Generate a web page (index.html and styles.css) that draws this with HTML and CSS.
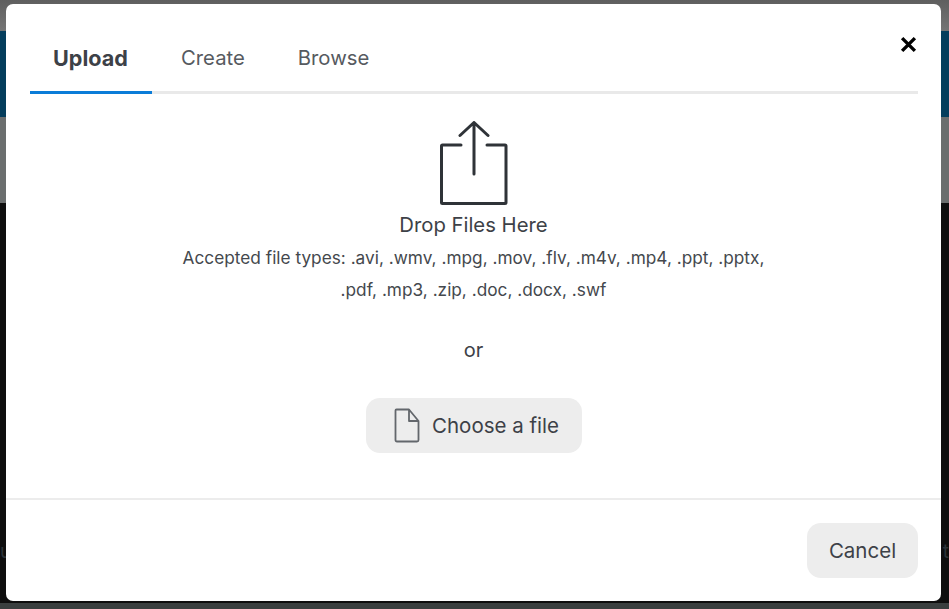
FILE: index.html
```html
<!DOCTYPE html>
<html lang="en">
<head>
<meta charset="utf-8">
<title>Upload</title>
<link rel="stylesheet" href="styles.css">
</head>
<body>
<div class="backdrop">
  <div class="band band-top"></div>
  <div class="band band-blue"></div>
  <div class="band band-grey"></div>
  <div class="band band-dark">
    <span class="ghost">u</span>
    <span class="ghost">t</span>
  </div>
  <div class="band band-bottom"></div>
</div>
<section class="modal">
  <header class="tabs-row">
    <nav class="tabs">
      <a class="tab tab-active">Upload</a>
      <a class="tab">Create</a>
      <a class="tab">Browse</a>
    </nav>
    <svg class="close" viewBox="0 0 16 16" width="17" height="17"><path d="M2 2 14 14M14 2 2 14"/></svg>
  </header>
  <main class="body">
    <svg class="upload-icon" viewBox="0 0 68 84" width="68" height="84">
      <path d="M21 24H2.500Q1.500 24 1.500 25V81.500Q1.500 82.500 2.500 82.500H65Q66 82.500 66 81.500V25Q66 24 65 24H47"/>
      <path d="M34 53V1.500M20 14.500 34 1.500 48 14.500"/>
    </svg>
    <div class="drop">Drop Files Here</div>
    <p class="types">Accepted file types: .avi, .wmv, .mpg, .mov, .flv, .m4v, .mp4, .ppt, .pptx,<br>.pdf, .mp3, .zip, .doc, .docx, .swf</p>
    <div class="or">or</div>
    <button class="btn btn-file">
      <svg class="file-icon" viewBox="0 0 26 35" width="26" height="35"><path d="M1.500 2.500Q1.500 1.500 2.500 1.500H15L24.500 13V32Q24.500 33.500 23 33.500H3Q1.500 33.500 1.500 32ZM15 1.500V13H24.500"/></svg>
      <span>Choose a file</span>
    </button>
  </main>
  <footer class="foot">
    <button class="btn btn-cancel">Cancel</button>
  </footer>
</section>
</body>
</html>
```
FILE: styles.css
```css
* { box-sizing: border-box; }
html, body { margin: 0; height: 100%; overflow: hidden; }
body { font-family: Inter, "Noto Sans", sans-serif; color: #3d4147; background: #0f0f0f; }

.backdrop { display: flex; flex-direction: column; height: 609px; }
.band-top { height: 31px; background: linear-gradient(#5f5f5f, #757575); }
.band-blue { height: 86px; background: #043d5c; }
.band-grey { height: 86px; background: #6b6e6e; }
.band-dark { flex: 1; background: #0e0e0e; display: flex; justify-content: space-between; align-items: flex-end; padding: 0 0 41px; }
.band-bottom { height: 6px; background: #3a3f3f; }
.ghost { color: #2c3338; font-size: 19px; line-height: 20px; }

.modal {
  position: absolute; left: 6px; top: 4px; width: 935px; height: 597px;
  background: #fff; border-radius: 7px;
  display: flex; flex-direction: column;
}
.tabs-row { display: flex; justify-content: space-between; margin: 0 23px 0 24px; height: 90px; border-bottom: 3px solid #e9e9e9; position: relative; }
.tabs { display: flex; gap: 0; }
.tab { height: 90px; padding: 39px 23px 0; font-size: 20.300px; line-height: 30px; color: #565a60; margin-right: 7px; }
.tab-active { font-size: 21.600px; font-weight: 700; color: #3d4147; border-bottom: 3px solid #0a7cd8; margin-right: 6px; width: 122px; }
.close { position: absolute; right: 1px; top: 32px; fill: none; stroke: #000; stroke-width: 3.200; }

.body { height: 406px; display: flex; flex-direction: column; align-items: center; border-bottom: 2px solid #ececec; }
.upload-icon { margin-top: 27px; fill: none; stroke: #2f3338; stroke-width: 3; stroke-linejoin: round; stroke-linecap: round; }
.drop { font-size: 20.300px; line-height: 30px; margin-top: 5px; color: #3d4147; }
.types { margin: 2px 0 0; font-size: 17.250px; line-height: 32px; text-align: center; color: #44484d; }
.or { font-size: 20px; line-height: 30px; margin-top: 29px; }
.btn { border: 0; font: inherit; color: #3d4147; background: #ededed; border-radius: 14px; font-size: 20.500px; }
.btn-file { margin-top: 33px; width: 216px; height: 55px; display: flex; align-items: center; justify-content: center; gap: 12px; padding: 0 0 0 6px; }
.file-icon { fill: none; stroke: #63676c; stroke-width: 1.800; stroke-linejoin: round; }

.foot { flex: 1; display: flex; justify-content: flex-end; align-items: flex-start; padding: 23px 23px 0 0; }
.btn-cancel { width: 111px; height: 55px; padding: 0 0 1px; }
```
